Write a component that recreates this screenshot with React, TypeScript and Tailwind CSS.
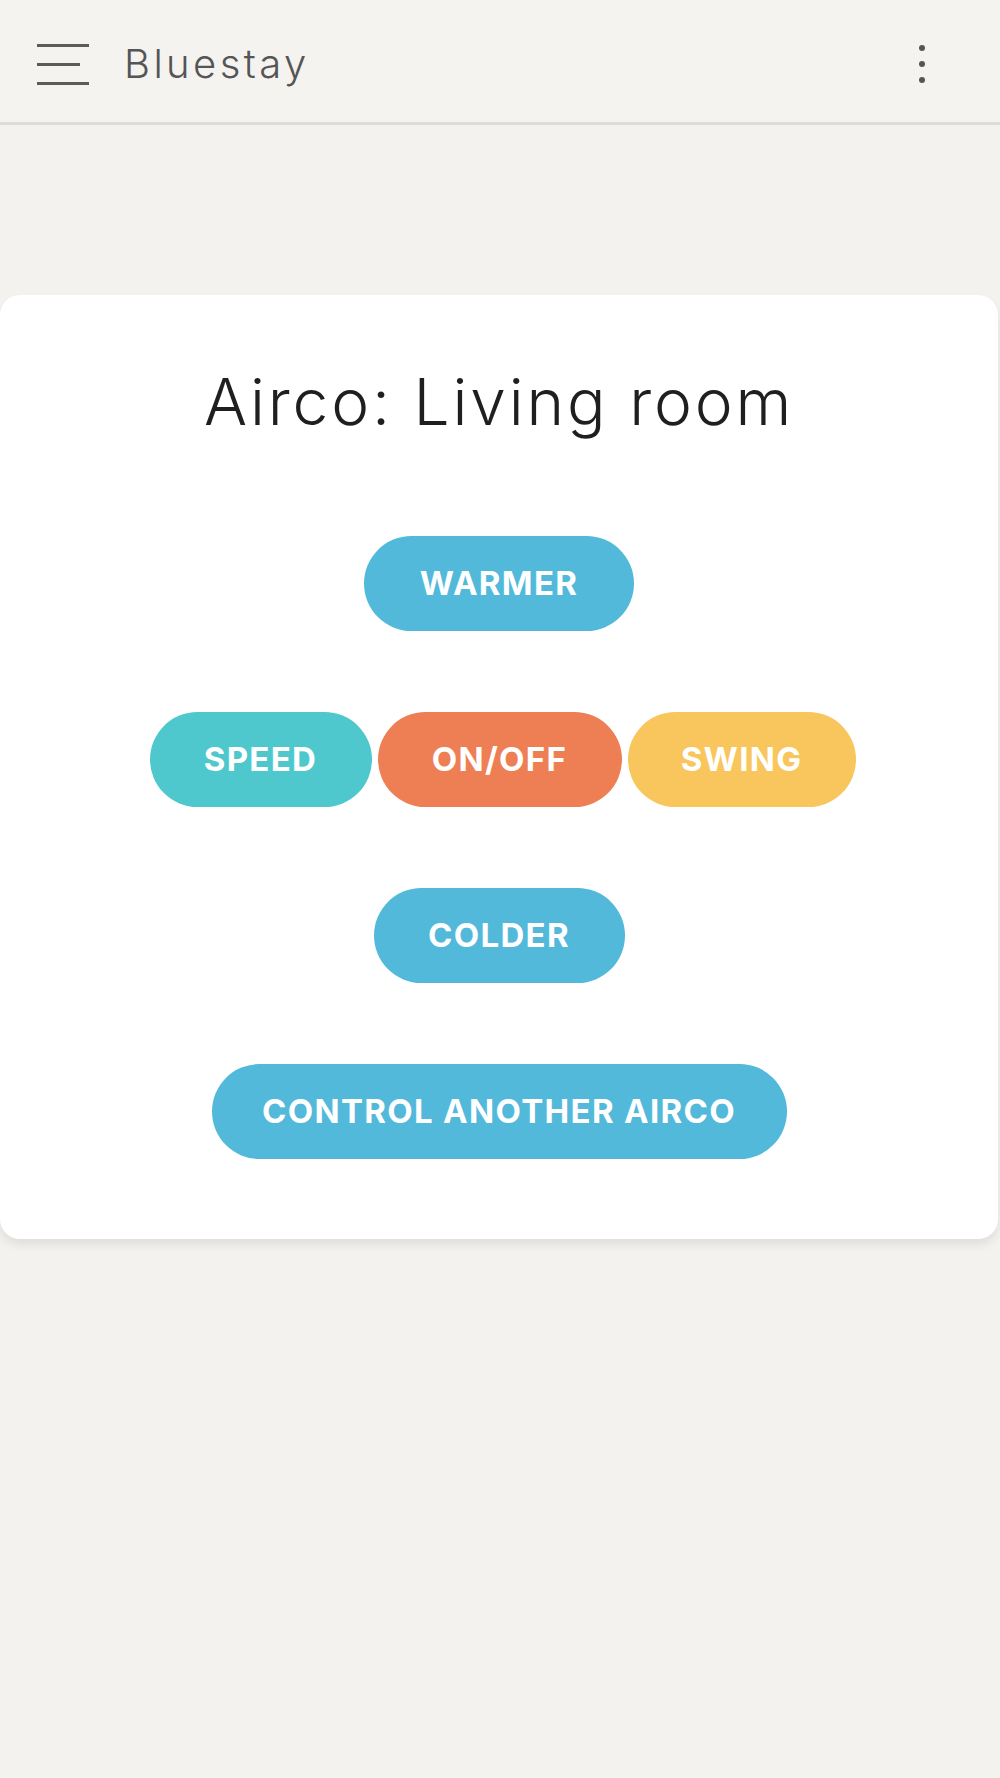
const buttonBase =
  'h-[95px] rounded-full flex items-center justify-center text-white font-bold text-[33px] tracking-[0.04em]';

function Header() {
  return (
    <header className="h-[125px] pt-[6px] flex items-center justify-between border-b-[3px] border-[#dedcd8] bg-[#f4f3f0]">
      <div className="flex items-center">
        <div className="ml-[37px] w-[52px] flex flex-col gap-[16px]">
          <span className="block h-[3px] w-[52px] bg-[#5a5a5a]" />
          <span className="block h-[3px] w-[43px] bg-[#5a5a5a]" />
          <span className="block h-[3px] w-[52px] bg-[#5a5a5a]" />
        </div>
        <h1 className="ml-[35px] text-[40px] font-light text-[#555555] tracking-[0.085em] leading-none">
          Bluestay
        </h1>
      </div>
      <button className="mr-[75px] flex flex-col gap-[10px]" title="More">
        <span className="block w-[6px] h-[6px] rounded-full bg-[#555555]" />
        <span className="block w-[6px] h-[6px] rounded-full bg-[#555555]" />
        <span className="block w-[6px] h-[6px] rounded-full bg-[#555555]" />
      </button>
    </header>
  );
}

export default function App() {
  return (
    <div
      className="min-h-[1778px] bg-[#f3f2ef]"
      style={{ fontFamily: 'Inter, "Open Sans", sans-serif' }}
    >
      <Header />

      <main className="pt-[170px]">
        <section className="mr-[2px] bg-white rounded-[20px] shadow-[0_6px_10px_rgba(0,0,0,0.08)] pt-[73px] pb-[80px] flex flex-col items-center">
          <h2 className="text-[64px] font-light text-[#1f1f1f] leading-[68px] tracking-[0.044em]">
            Airco: Living room
          </h2>

          <div className="mt-[100px] flex flex-col items-center gap-[81px]">
            <button className={`${buttonBase} w-[270px] bg-[#52b9da]`}>WARMER</button>

            <div className="flex gap-[6px] pl-[7px]">
              <button className={`${buttonBase} w-[222px] bg-[#4fc8cd]`}>SPEED</button>
              <button className={`${buttonBase} w-[244px] bg-[#ee7f55]`}>ON/OFF</button>
              <button className={`${buttonBase} w-[228px] bg-[#f8c65c]`}>SWING</button>
            </div>

            <button className={`${buttonBase} w-[251px] bg-[#52b9da]`}>COLDER</button>

            <button className={`${buttonBase} w-[575px] bg-[#52b9da]`}>
              CONTROL ANOTHER AIRCO
            </button>
          </div>
        </section>
      </main>
    </div>
  );
}
